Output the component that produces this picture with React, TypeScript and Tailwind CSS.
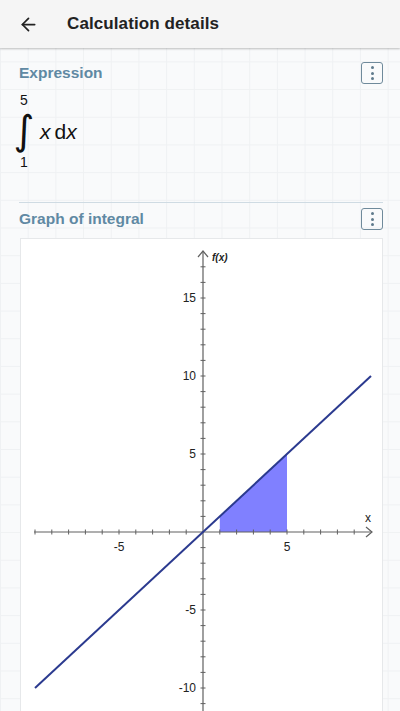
import React from "react";
import { ArrowLeft } from "lucide-react";

function MenuBtn() {
  return (
    <div className="w-[22px] h-[22px] rounded-[3px] border-[1.5px] border-[#6f8a9b] flex flex-col items-center justify-center gap-[2.5px]">
      <span className="w-[3px] h-[3px] rounded-full bg-[#5f7a8c]" />
      <span className="w-[3px] h-[3px] rounded-full bg-[#5f7a8c]" />
      <span className="w-[3px] h-[3px] rounded-full bg-[#5f7a8c]" />
    </div>
  );
}

function Graph() {
  const ox = 202;
  const oy = 531;
  const ux = 16.8;
  const uy = 15.6;
  const xt: number[] = [];
  for (let i = -10; i <= 9; i++) if (i !== 0) xt.push(i);
  const yt: number[] = [];
  for (let i = -12; i <= 17; i++) if (i !== 0) yt.push(i);
  const fillPts = `${ox + ux},${oy} ${ox + ux},${oy - uy} ${ox + 5 * ux},${oy - 5 * uy} ${ox + 5 * ux},${oy}`;
  return (
    <svg width="363" height="473" viewBox="20 238 363 473" className="block">
      <polygon points={fillPts} fill="#8080ff" />
      <line x1="33" y1={oy} x2="371" y2={oy} stroke="#606060" strokeWidth="1.2" />
      <polyline points={`365,${oy - 5} 371,${oy} 365,${oy + 5}`} fill="none" stroke="#606060" strokeWidth="1.2" />
      {xt.map((i) => (
        <line key={"x" + i} x1={ox + i * ux} y1={oy - 2.5} x2={ox + i * ux} y2={oy + 2.5} stroke="#606060" strokeWidth="1" />
      ))}
      <line x1={ox} y1="251" x2={ox} y2="720" stroke="#606060" strokeWidth="1.2" />
      <polyline points={`${ox - 5},256 ${ox},250 ${ox + 5},256`} fill="none" stroke="#606060" strokeWidth="1.2" />
      {yt.map((i) => (
        <line key={"y" + i} x1={ox - 2.5} y1={oy - i * uy} x2={ox + 2.5} y2={oy - i * uy} stroke="#606060" strokeWidth="1" />
      ))}
      <line x1={ox - 10 * ux} y1={oy + 10 * uy} x2={ox + 10 * ux} y2={oy - 10 * uy} stroke="#2b3a8f" strokeWidth="2" />
      <g fontFamily="'Liberation Sans', Arial, sans-serif" fontSize="12" fill="#222">
        <text x={ox - 5 * ux} y={oy + 19} textAnchor="middle">-5</text>
        <text x={ox + 5 * ux} y={oy + 19} textAnchor="middle">5</text>
        <text x="367" y="521" textAnchor="middle">x</text>
        <text x={ox - 7} y={oy - 15 * uy + 4} textAnchor="end">15</text>
        <text x={ox - 7} y={oy - 10 * uy + 4} textAnchor="end">10</text>
        <text x={ox - 7} y={oy - 5 * uy + 4} textAnchor="end">5</text>
        <text x={ox - 7} y={oy + 5 * uy + 4} textAnchor="end">-5</text>
        <text x={ox - 7} y={oy + 10 * uy + 4} textAnchor="end">-10</text>
        <text x="211" y="260" fontStyle="italic" fontWeight="bold" fontSize="10">f(x)</text>
      </g>
    </svg>
  );
}

export default function App() {
  return (
    <div
      className="w-[400px] h-[711px] overflow-hidden bg-[#f9fafb] bg-[linear-gradient(to_right,#eff1f3_1px,transparent_1px),linear-gradient(to_bottom,#eff1f3_1px,transparent_1px)] bg-[size:27.7px_27.7px] bg-[position:0px_6px] flex flex-col"
      style={{ fontFamily: "'Liberation Sans', Arial, sans-serif" }}
    >
      <header className="h-12 shrink-0 bg-[#f5f5f5] shadow-[0_1px_2px_rgba(0,0,0,0.25)] flex items-center relative z-10">
        <ArrowLeft className="ml-[18px] text-[#222]" size={21} strokeWidth={2} />
        <h1 className="ml-[28px] text-[17px] font-bold text-[#222] tracking-[0.1px]">Calculation details</h1>
      </header>

      <main className="px-[19px] flex flex-col">
        <div className="mt-[14px] h-[22px] flex items-center justify-between">
          <span className="text-[15.5px] text-[#6089a3] font-semibold">Expression</span>
          <div className="mr-[-2px]"><MenuBtn /></div>
        </div>

        <div className="mt-[9px] h-[76px] flex items-center">
          <div className="flex flex-col items-center w-[10px]">
            <span className="text-[14px] leading-[14px] h-[14px] text-[#111]">5</span>
            <span
              className="text-[40px] leading-[44px] h-[44px] mt-[1px] text-[#111]"
              style={{ fontFamily: "'DejaVu Sans', sans-serif" }}
            >
              ∫
            </span>
            <span className="text-[14px] leading-[14px] h-[14px] mt-[3px] text-[#111]">1</span>
          </div>
          <div className="ml-[11px] text-[21px] text-[#111] mt-[2px]">
            <span className="italic">x</span>
            <span className="ml-[4px]">d</span>
            <span className="italic">x</span>
          </div>
        </div>

        <div className="mt-[33px] h-px bg-[#cfdbe3] mr-[-2px]" />

        <div className="mt-[5px] h-[22px] flex items-center justify-between">
          <span className="text-[15.5px] text-[#6089a3] font-semibold">Graph of integral</span>
          <div className="mr-[-2px]"><MenuBtn /></div>
        </div>

        <div className="mt-[8px] ml-[1px] mr-[-2px] bg-white border border-[#e6e8ea] overflow-hidden h-[480px]">
          <Graph />
        </div>
      </main>
    </div>
  );
}
